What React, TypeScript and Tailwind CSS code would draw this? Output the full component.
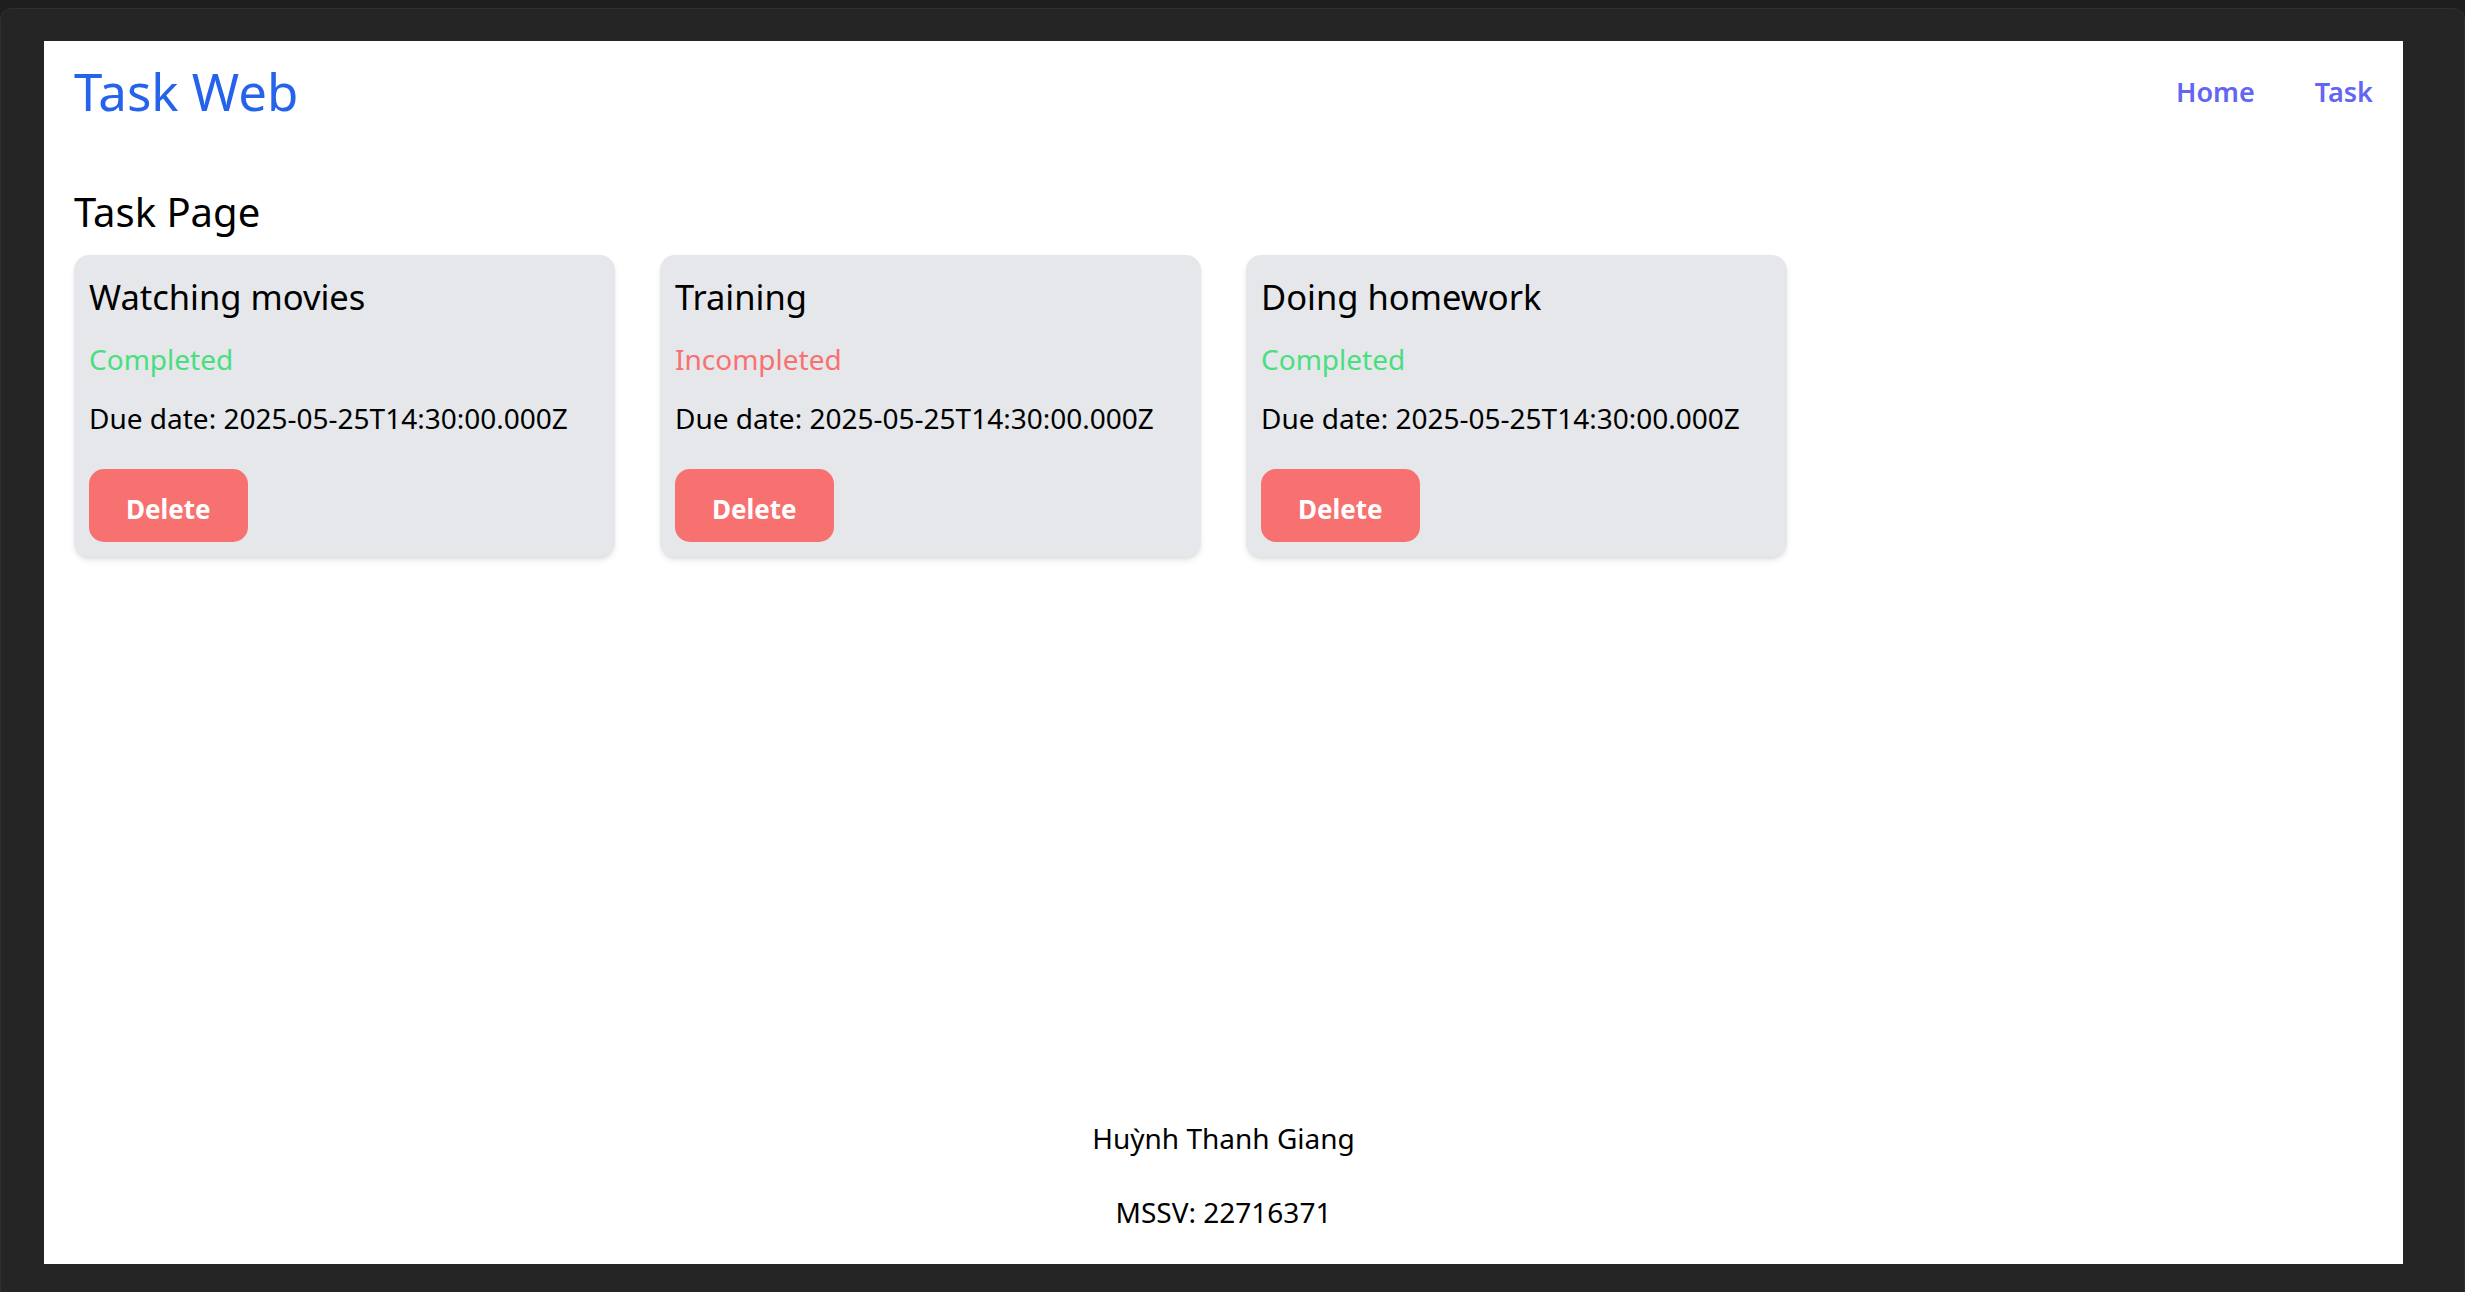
import React from "react";

type Task = {
  id: number;
  title: string;
  completed: boolean;
  dueDate: string;
};

const tasks: Task[] = [
  { id: 1, title: "Watching movies", completed: true, dueDate: "2025-05-25T14:30:00.000Z" },
  { id: 2, title: "Training", completed: false, dueDate: "2025-05-25T14:30:00.000Z" },
  { id: 3, title: "Doing homework", completed: true, dueDate: "2025-05-25T14:30:00.000Z" },
];

function TaskCard({ task }: { task: Task }) {
  return (
    <div className="w-[541px] rounded-[15px] bg-[#e5e7eb] pt-[16px] px-[15px] pb-[15px] shadow-md">
      <h2 className="text-[34.5px] leading-[52px] text-black">{task.title}</h2>
      {/* trạng thái */}
      <p
        className={
          task.completed
            ? "mt-[14px] text-[28px] leading-[45px] text-[#4ade80]"
            : "mt-[14px] text-[28px] leading-[45px] text-[#f87171]"
        }
      >
        {task.completed ? "Completed" : "Incompleted"}
      </p>
      <p className="mt-[14px] text-[28px] leading-[45px] text-black">Due date: {task.dueDate}</p>
      <button className="mt-[28px] rounded-[15px] bg-[#f87171] px-[37px] pt-[18px] pb-[10px] text-[26px] font-bold leading-[45px] text-white">
        Delete
      </button>
    </div>
  );
}

export default function App() {
  return (
    <div className="flex h-screen w-full flex-col bg-[#1e1e1e] pt-[8px] font-['Noto_Sans',sans-serif]">
      <div className="flex flex-1 flex-col rounded-t-[12px] border-x border-t border-[#303030] bg-[#252525] pl-[43px] pr-[61px] pt-[32px] pb-[28px]">
        <div className="flex flex-1 flex-col bg-white">
          {/* Header */}
          <header className="flex items-center justify-between px-[30px] pt-[17px]">
            <h1 className="text-[51px] leading-[67px] text-[#2563eb]">Task Web</h1>
            <nav className="flex gap-[60px] text-[27px] font-semibold leading-[45px] text-[#6366f1]">
              <a href="#">Home</a>
              <a href="#">Task</a>
            </nav>
          </header>

          {/* Nội dung */}
          <main className="flex-1 px-[30px] pt-[57px]">
            <h2 className="mb-[13px] text-[40px] leading-[60px] text-black">Task Page</h2>
            <div className="flex gap-[45px]">
              {tasks.map((t) => (
                <TaskCard key={t.id} task={t} />
              ))}
            </div>
          </main>

          {/* Footer */}
          <footer className="flex flex-col items-center gap-[29px] pb-[29px] text-[28px] leading-[45px] text-black">
            <p>Huỳnh Thanh Giang</p>
            <p>MSSV: 22716371</p>
          </footer>
        </div>
      </div>
    </div>
  );
}
